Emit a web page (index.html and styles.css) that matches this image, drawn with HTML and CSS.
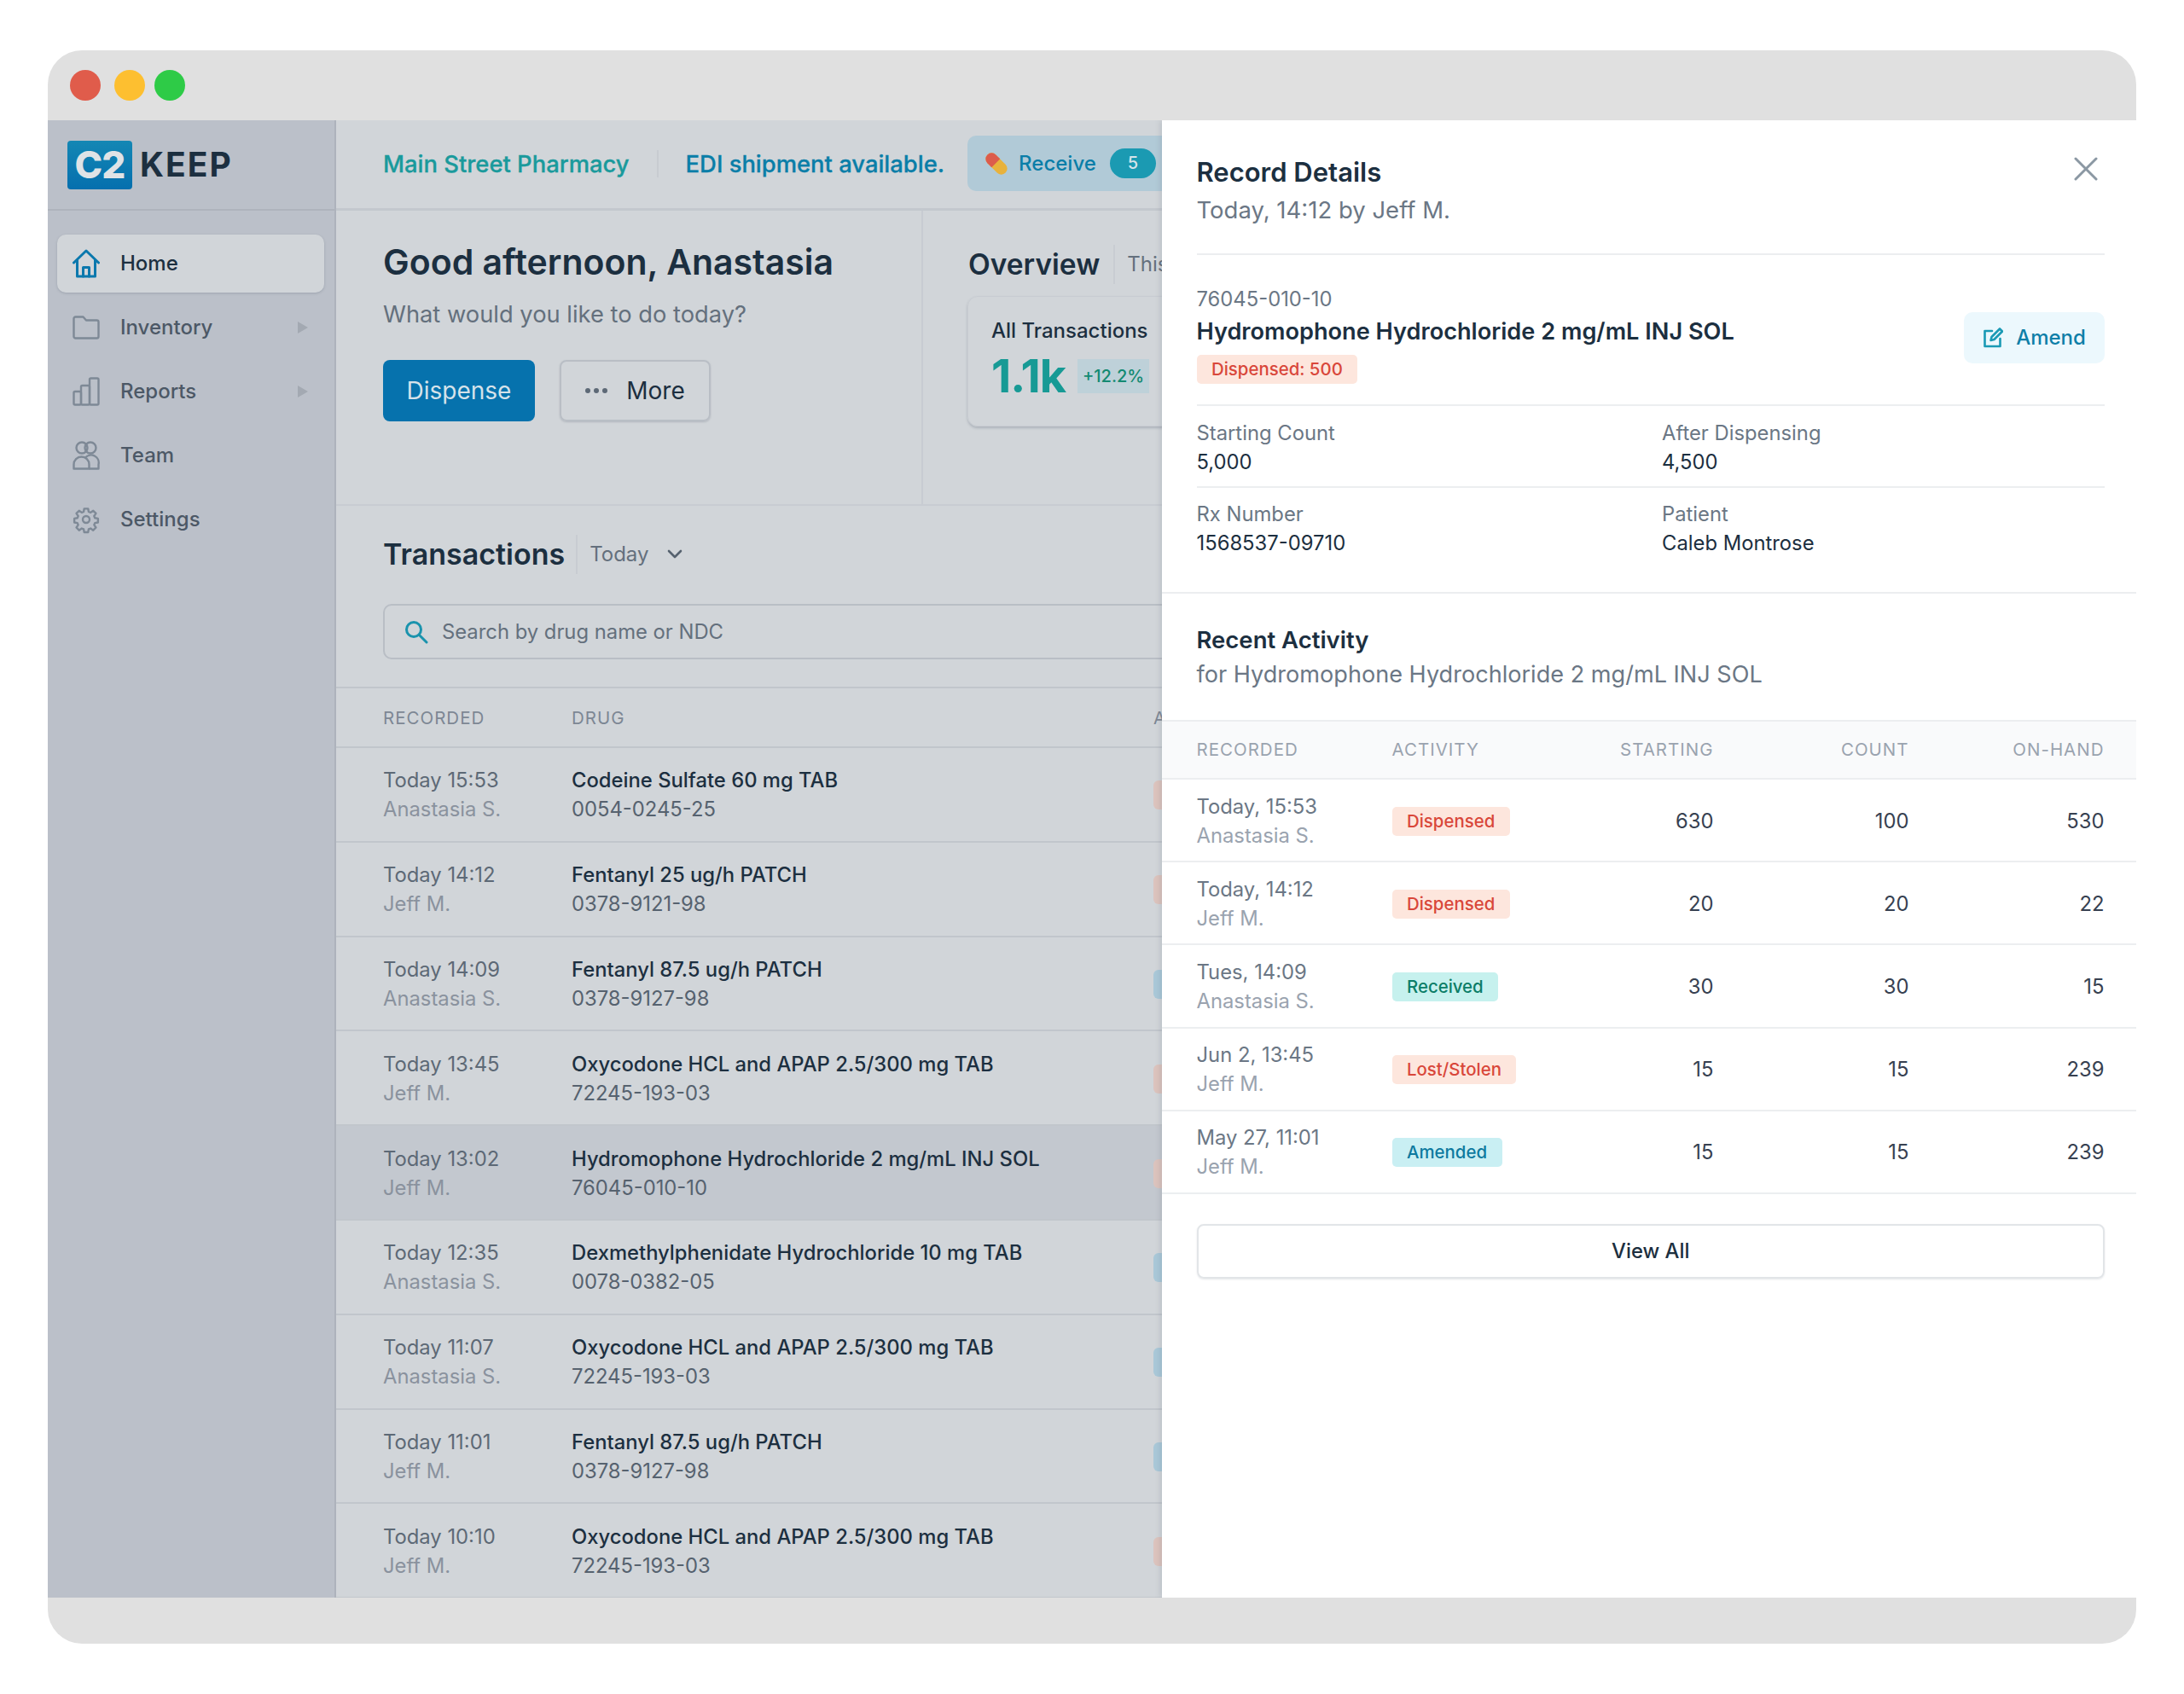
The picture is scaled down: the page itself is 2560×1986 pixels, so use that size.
FILE: index.html
```html
<!DOCTYPE html>
<html lang="en">
<head>
    <meta charset="UTF-8">
    <title>C2 Keep - Record Details</title>
    <link rel="stylesheet" href="styles.css">
</head>
<body>
    <div class="window">
        <div class="titlebar">
            <span class="light light-red"></span>
            <span class="light light-yellow"></span>
            <span class="light light-green"></span>
        </div>
        <div class="app">
            <aside class="sidebar">
                <div class="logo">
                    <span class="logo-mark">C2</span>
                    <span class="logo-word">KEEP</span>
                </div>
                <nav class="nav">
                    <a class="nav-item nav-item-active">
                        <svg class="nav-icon" viewBox="0 0 32 34" fill="none" stroke="#0a78ad" stroke-width="3" stroke-linejoin="round" stroke-linecap="round"><path d="M1.500 16 16 2l14.500 14"/><path d="M5.500 13v19h21V13"/><path d="M12.500 32V21.500h7V32"/></svg>
                        <span>Home</span>
                    </a>
                    <a class="nav-item">
                        <svg class="nav-icon" viewBox="0 0 32 34" fill="none" stroke="#7e8996" stroke-width="2.400" stroke-linejoin="round"><path d="M1.500 6.500a2 2 0 0 1 2-2h9l3.500 4h12.500a2 2 0 0 1 2 2v17a2 2 0 0 1-2 2h-25a2 2 0 0 1-2-2z"/></svg>
                        <span>Inventory</span>
                        <span class="nav-arrow"></span>
                    </a>
                    <a class="nav-item">
                        <svg class="nav-icon" viewBox="0 0 32 34" fill="none" stroke="#7e8996" stroke-width="2.400" stroke-linejoin="round"><rect x="1.500" y="17" width="8.500" height="15.500" rx="1.500"/><rect x="10" y="10" width="10" height="22.500" rx="1.500"/><rect x="20" y="1.500" width="10.500" height="31" rx="1.500"/></svg>
                        <span>Reports</span>
                        <span class="nav-arrow"></span>
                    </a>
                    <a class="nav-item">
                        <svg class="nav-icon" viewBox="0 0 32 34" fill="none" stroke="#7e8996" stroke-width="2.400" stroke-linejoin="round"><circle cx="11" cy="8" r="6.500"/><circle cx="21" cy="8" r="6.500"/><path d="M1.500 32.500v-5a9 9 0 0 1 18 0v5z"/><path d="M15 19.500a9 9 0 0 1 15.500 8v5H19.500"/></svg>
                        <span>Team</span>
                    </a>
                    <a class="nav-item">
                        <svg class="nav-icon" viewBox="0 0 24 24" fill="none" stroke="#7e8996" stroke-width="1.800" stroke-linejoin="round"><circle cx="12" cy="12" r="3"/><path d="M10.300 2.500h3.400l.5 2.700 1.700.7 2.300-1.600 2.400 2.400-1.600 2.300.7 1.700 2.700.5v3.400l-2.700.5-.7 1.700 1.600 2.300-2.400 2.400-2.300-1.600-1.700.7-.5 2.700h-3.400l-.5-2.700-1.700-.7-2.300 1.600-2.400-2.400 1.600-2.300-.7-1.700-2.700-.5v-3.400l2.700-.5.7-1.700-1.600-2.300 2.400-2.400 2.300 1.600 1.700-.7z"/></svg>
                        <span>Settings</span>
                    </a>
                </nav>
            </aside>

            <main class="main">
                <header class="topbar">
                    <span class="store-name">Main Street Pharmacy</span>
                    <span class="topbar-sep"></span>
                    <span class="edi-note">EDI shipment available.</span>
                    <a class="receive-btn">
                        <svg class="receive-icon" viewBox="0 0 26 26"><g transform="rotate(-45 13 13)"><rect x="6" y="-2" width="14" height="30" rx="7" fill="#e8b23c"/><path d="M6 12V5a7 7 0 0 1 14 0v7z" fill="#dc5c4c"/></g></svg>
                        <span>Receive</span>
                        <span class="receive-count">5</span>
                    </a>
                </header>

                <section class="hero">
                    <div class="hero-left">
                        <h1 class="greeting">Good afternoon, Anastasia</h1>
                        <p class="greeting-sub">What would you like to do today?</p>
                        <div class="hero-actions">
                            <a class="btn btn-primary">Dispense</a>
                            <a class="btn btn-outline"><span class="dots"><i></i><i></i><i></i></span>More</a>
                        </div>
                    </div>
                    <div class="hero-right">
                        <div class="overview-head">
                            <h2 class="overview-title">Overview</h2>
                            <span class="overview-range">This Week</span>
                        </div>
                        <div class="stat-card">
                            <div class="stat-label">All Transactions</div>
                            <div class="stat-row">
                                <span class="stat-value">1.1k</span>
                                <span class="stat-change">+12.2%</span>
                            </div>
                        </div>
                    </div>
                </section>

                <section class="tx-top">
                    <div class="tx-head">
                        <h2 class="tx-title">Transactions</h2>
                        <span class="tx-range">Today</span>
                        <svg class="tx-chevron" viewBox="0 0 20 12" fill="none" stroke="#56626f" stroke-width="2.600" stroke-linecap="round" stroke-linejoin="round"><path d="M3 2l7 7 7-7"/></svg>
                    </div>
                    <div class="search">
                        <svg class="search-icon" viewBox="0 0 28 28" fill="none" stroke="#1a93ad" stroke-width="3" stroke-linecap="round"><circle cx="11" cy="11" r="8.500"/><path d="M17.500 17.500 26 26"/></svg>
                        <span>Search by drug name or NDC</span>
                    </div>
                </section>

                <div class="tx-row tx-row-head">
                    <span>RECORDED</span><span>DRUG</span><span>ACTIVITY</span>
                </div>
                <div class="tx-row">
                    <div><div class="tx-time">Today 15:53</div><div class="tx-user">Anastasia S.</div></div>
                    <div><div class="tx-drug">Codeine Sulfate 60 mg TAB</div><div class="tx-ndc">0054-0245-25</div></div>
                    <span class="tx-peek tx-peek-red"></span>
                </div>
                <div class="tx-row">
                    <div><div class="tx-time">Today 14:12</div><div class="tx-user">Jeff M.</div></div>
                    <div><div class="tx-drug">Fentanyl 25 ug/h PATCH</div><div class="tx-ndc">0378-9121-98</div></div>
                    <span class="tx-peek tx-peek-red"></span>
                </div>
                <div class="tx-row">
                    <div><div class="tx-time">Today 14:09</div><div class="tx-user">Anastasia S.</div></div>
                    <div><div class="tx-drug">Fentanyl 87.5 ug/h PATCH</div><div class="tx-ndc">0378-9127-98</div></div>
                    <span class="tx-peek tx-peek-blue"></span>
                </div>
                <div class="tx-row">
                    <div><div class="tx-time">Today 13:45</div><div class="tx-user">Jeff M.</div></div>
                    <div><div class="tx-drug">Oxycodone HCL and APAP 2.5/300 mg TAB</div><div class="tx-ndc">72245-193-03</div></div>
                    <span class="tx-peek tx-peek-red"></span>
                </div>
                <div class="tx-row tx-row-selected">
                    <div><div class="tx-time">Today 13:02</div><div class="tx-user">Jeff M.</div></div>
                    <div><div class="tx-drug">Hydromophone Hydrochloride 2 mg/mL INJ SOL</div><div class="tx-ndc">76045-010-10</div></div>
                    <span class="tx-peek tx-peek-red"></span>
                </div>
                <div class="tx-row">
                    <div><div class="tx-time">Today 12:35</div><div class="tx-user">Anastasia S.</div></div>
                    <div><div class="tx-drug">Dexmethylphenidate Hydrochloride 10 mg TAB</div><div class="tx-ndc">0078-0382-05</div></div>
                    <span class="tx-peek tx-peek-blue"></span>
                </div>
                <div class="tx-row">
                    <div><div class="tx-time">Today 11:07</div><div class="tx-user">Anastasia S.</div></div>
                    <div><div class="tx-drug">Oxycodone HCL and APAP 2.5/300 mg TAB</div><div class="tx-ndc">72245-193-03</div></div>
                    <span class="tx-peek tx-peek-blue"></span>
                </div>
                <div class="tx-row">
                    <div><div class="tx-time">Today 11:01</div><div class="tx-user">Jeff M.</div></div>
                    <div><div class="tx-drug">Fentanyl 87.5 ug/h PATCH</div><div class="tx-ndc">0378-9127-98</div></div>
                    <span class="tx-peek tx-peek-blue"></span>
                </div>
                <div class="tx-row">
                    <div><div class="tx-time">Today 10:10</div><div class="tx-user">Jeff M.</div></div>
                    <div><div class="tx-drug">Oxycodone HCL and APAP 2.5/300 mg TAB</div><div class="tx-ndc">72245-193-03</div></div>
                    <span class="tx-peek tx-peek-red"></span>
                </div>
            </main>

            <aside class="detail">
                <div class="detail-head">
                    <div>
                        <h2 class="detail-title">Record Details</h2>
                        <p class="detail-sub">Today, 14:12 by Jeff M.</p>
                    </div>
                    <svg class="detail-close" viewBox="0 0 28 28" fill="none" stroke="#8b98a3" stroke-width="3" stroke-linecap="round"><path d="M2 2l24 24M26 2 2 26"/></svg>
                </div>

                <div class="record">
                    <div>
                        <div class="record-ndc">76045-010-10</div>
                        <div class="record-name">Hydromophone Hydrochloride 2 mg/mL INJ SOL</div>
                        <span class="badge badge-red">Dispensed: 500</span>
                    </div>
                    <a class="amend-btn">
                        <svg class="amend-icon" viewBox="0 0 24 24" fill="none" stroke="#1a9ab5" stroke-width="2.600" stroke-linecap="round" stroke-linejoin="round"><path d="M11 4H2.500v18h18v-9"/><path d="M9.500 15l1-4L20 1.500l3 3L13.500 14z"/></svg>
                        <span>Amend</span>
                    </a>
                </div>

                <div class="fields fields-first">
                    <div><div class="field-label">Starting Count</div><div class="field-value">5,000</div></div>
                    <div><div class="field-label">After Dispensing</div><div class="field-value">4,500</div></div>
                </div>
                <div class="fields fields-second">
                    <div><div class="field-label">Rx Number</div><div class="field-value">1568537-09710</div></div>
                    <div><div class="field-label">Patient</div><div class="field-value">Caleb Montrose</div></div>
                </div>

                <div class="recent-head">
                    <h3 class="recent-title">Recent Activity</h3>
                    <p class="recent-sub">for Hydromophone Hydrochloride 2 mg/mL INJ SOL</p>
                </div>

                <div class="act-row act-row-head">
                    <span>RECORDED</span><span>ACTIVITY</span>
                    <span class="num">STARTING</span><span class="num">COUNT</span><span class="num">ON-HAND</span>
                </div>
                <div class="act-row">
                    <div><div class="act-time">Today, 15:53</div><div class="act-user">Anastasia S.</div></div>
                    <div><span class="badge badge-red">Dispensed</span></div>
                    <span class="num">630</span><span class="num">100</span><span class="num">530</span>
                </div>
                <div class="act-row">
                    <div><div class="act-time">Today, 14:12</div><div class="act-user">Jeff M.</div></div>
                    <div><span class="badge badge-red">Dispensed</span></div>
                    <span class="num">20</span><span class="num">20</span><span class="num">22</span>
                </div>
                <div class="act-row">
                    <div><div class="act-time">Tues, 14:09</div><div class="act-user">Anastasia S.</div></div>
                    <div><span class="badge badge-green">Received</span></div>
                    <span class="num">30</span><span class="num">30</span><span class="num">15</span>
                </div>
                <div class="act-row">
                    <div><div class="act-time">Jun 2, 13:45</div><div class="act-user">Jeff M.</div></div>
                    <div><span class="badge badge-red">Lost/Stolen</span></div>
                    <span class="num">15</span><span class="num">15</span><span class="num">239</span>
                </div>
                <div class="act-row">
                    <div><div class="act-time">May 27, 11:01</div><div class="act-user">Jeff M.</div></div>
                    <div><span class="badge badge-blue">Amended</span></div>
                    <span class="num">15</span><span class="num">15</span><span class="num">239</span>
                </div>

                <a class="view-all">View All</a>
            </aside>
        </div>
        <div class="bottombar"></div>
    </div>
</body>
</html>
```

FILE: styles.css
```css
* {
    box-sizing: border-box;
}
body {
    margin: 0;
    padding: 59px 56px 0;
    background: #fff;
    font-family: 'Inter', 'Liberation Sans', sans-serif;
    font-size: 23.800px;
    line-height: 34px;
    color: #1c2f40;
}
h1, h2, h3, p {
    margin: 0;
}

/* window chrome */
.window {
    width: 2448px;
    height: 1868px;
    border-radius: 40px;
    overflow: hidden;
    background: #e0e0e0;
}
.titlebar {
    height: 82px;
    display: flex;
    align-items: center;
    padding-left: 26px;
}
.light {
    width: 36px;
    height: 36px;
    border-radius: 50%;
    margin-right: 11px;
}
.light-red {
    background: #e05c4b;
    margin-right: 16px;
}
.light-yellow {
    background: #fdbf30;
}
.light-green {
    background: #2ecb47;
}
.bottombar {
    height: 54px;
}
.app {
    height: 1732px;
    display: flex;
    overflow: hidden;
}

/* sidebar */
.sidebar {
    width: 338px;
    flex: none;
    background: #bbc0c9;
    border-right: 2px solid #aeb3bc;
}
.logo {
    height: 106px;
    display: flex;
    align-items: center;
    padding: 0 0 0 23px;
    border-bottom: 2px solid #aeb3bc;
}
.logo-mark {
    width: 76px;
    height: 57px;
    border-radius: 4px;
    background: linear-gradient(#1487b4, #056fae);
    color: #dfe3e6;
    font-size: 44px;
    font-weight: 800;
    line-height: 57px;
    text-align: center;
    letter-spacing: -1px;
}
.logo-word {
    margin-left: 9px;
    font-size: 39px;
    font-weight: 700;
    letter-spacing: 2px;
    color: #1c2f40;
}
.nav {
    padding: 28px 12px 0 11px;
}
.nav-item {
    height: 68px;
    margin-bottom: 7px;
    padding-left: 18px;
    display: flex;
    align-items: center;
    border-radius: 10px;
    color: #4c5866;
    font-weight: 500;
    font-size: 24px;
}
.nav-item-active {
    background: #d1d5d9;
    color: #1c2f40;
    box-shadow: 0 1px 3px rgba(90, 100, 115, 0.3);
}
.nav-icon {
    width: 32px;
    height: 34px;
    margin-right: 24px;
    flex: none;
}
.nav-arrow {
    margin-left: auto;
    margin-right: 19px;
    width: 0;
    height: 0;
    border-left: 12px solid #a3a9b2;
    border-top: 7px solid transparent;
    border-bottom: 7px solid transparent;
}

/* main column, cut off by the detail panel */
.main {
    width: 968px;
    flex: none;
    overflow: hidden;
    background: #d1d5d9;
}
.topbar {
    height: 106px;
    width: 1100px;
    padding: 0 0 2px 55px;
    display: flex;
    align-items: center;
    border-bottom: 3px solid #c3c8ce;
    font-size: 27.400px;
    font-weight: 500;
    -webkit-text-stroke: 0.3px;
}
.store-name {
    color: #1a9a9c;
}
.topbar-sep {
    width: 2px;
    height: 32px;
    margin: 0 32px 0 32px;
    background: #c8ccd1;
}
.edi-note {
    color: #0a7ea8;
}
.receive-btn {
    margin-left: 27px;
    width: 300px;
    height: 65px;
    padding-left: 21px;
    display: flex;
    align-items: center;
    border-radius: 10px;
    background: #b1cad7;
    color: #0a7ea8;
    font-size: 24px;
    -webkit-text-stroke: 0;
}
.receive-icon {
    width: 26px;
    height: 26px;
    margin-right: 13px;
}
.receive-count {
    width: 54px;
    height: 35px;
    margin-left: 16px;
    border-radius: 18px;
    background: #1b9ab2;
    color: #d6e4ea;
    font-size: 20px;
    line-height: 35px;
    text-align: center;
}
.hero {
    height: 346px;
    display: flex;
    border-bottom: 2px solid #c8ccd2;
}
.hero-left {
    width: 688px;
    flex: none;
    padding: 35px 0 0 55px;
    border-right: 2px solid #c8ccd2;
}
.greeting {
    font-size: 41px;
    line-height: 50px;
    font-weight: 600;
}
.greeting-sub {
    margin-top: 20px;
    font-size: 27.300px;
    color: #64707d;
}
.hero-actions {
    margin-top: 36px;
    display: flex;
    gap: 29px;
}
.btn {
    height: 72px;
    display: flex;
    align-items: center;
    justify-content: center;
    border-radius: 8px;
    font-size: 28px;
}
.btn-primary {
    width: 178px;
    background: #0672ad;
    color: #d5e2ea;
}
.btn-outline {
    width: 177px;
    border: 2px solid #b9bec5;
    box-shadow: 0 1px 2px rgba(90, 100, 115, 0.25);
    color: #1c2f40;
}
.dots {
    display: flex;
    gap: 4px;
    margin-right: 22px;
}
.dots i {
    width: 6px;
    height: 6px;
    border-radius: 50%;
    background: #5d6976;
}
.hero-right {
    width: 600px;
    flex: none;
    padding: 40px 0 0 53px;
}
.overview-head {
    height: 46px;
    display: flex;
    align-items: center;
}
.overview-title {
    font-size: 33.500px;
    font-weight: 600;
    padding-right: 16px;
    border-right: 2px solid #c8ccd2;
    line-height: 46px;
}
.overview-range {
    margin-left: 14px;
    color: #64707d;
    font-size: 24px;
}
.stat-card {
    width: 460px;
    height: 153px;
    margin-top: 14px;
    margin-left: -1px;
    padding: 23px 0 0 27px;
    border: 1px solid #c8ccd2;
    border-radius: 12px;
    box-shadow: 0 2px 3px rgba(90, 100, 115, 0.3);
}
.stat-label {
    font-weight: 500;
    font-size: 24px;
}
.stat-row {
    display: flex;
    align-items: center;
    margin-top: 5px;
}
.stat-value {
    font-size: 54px;
    line-height: 62px;
    font-weight: 700;
    color: #179a95;
    letter-spacing: -1px;
}
.stat-change {
    width: 84px;
    height: 40px;
    margin-left: 14px;
    background: #bed1d9;
    color: #148a72;
    font-size: 20px;
    font-weight: 500;
    line-height: 40px;
    text-align: center;
}
.tx-top {
    height: 212px;
    padding: 34px 0 0 55px;
}
.tx-head {
    height: 46px;
    display: flex;
    align-items: center;
}
.tx-title {
    font-size: 34px;
    line-height: 46px;
    font-weight: 600;
    padding-right: 13px;
    border-right: 2px solid #c8ccd2;
}
.tx-range {
    margin-left: 14px;
    color: #64707d;
    font-size: 24px;
}
.tx-chevron {
    width: 20px;
    height: 12px;
    margin-left: 21px;
}
.search {
    width: 1200px;
    height: 65px;
    margin-top: 35px;
    padding-left: 23px;
    display: flex;
    align-items: center;
    border: 2px solid #b9bec5;
    border-radius: 10px;
    color: #64707d;
}
.search-icon {
    width: 28px;
    height: 28px;
    margin-right: 16px;
}
.tx-row {
    height: 110.800px;
    width: 1100px;
    padding: 2px 0 0 55px;
    display: grid;
    grid-template-columns: 221px 682px 1fr;
    align-items: center;
    border-bottom: 2px solid #c1c6cc;
}
.tx-row-head {
    height: 72px;
    border-top: 2px solid #c1c6cc;
    color: #7d8794;
    font-size: 20.500px;
    letter-spacing: 1px;
}
.tx-row-selected {
    background: #c3c8cf;
}
.tx-time {
    color: #5d6976;
}
.tx-user {
    color: #8a929e;
}
.tx-drug {
    font-weight: 500;
    color: #1c2f40;
}
.tx-ndc {
    color: #56626f;
}
.tx-peek {
    width: 60px;
    height: 34px;
    border-radius: 6px;
}
.tx-peek-red {
    background: #dcc3bd;
}
.tx-peek-blue {
    background: #a9c8d8;
}

/* detail panel */
.detail {
    width: 1142px;
    flex: none;
    background: #fff;
    box-shadow: -2px 0 6px rgba(90, 100, 115, 0.18);
    position: relative;
}
.detail-head {
    height: 158px;
    margin: 0 37px 0 40.500px;
    padding-top: 43px;
    display: flex;
    justify-content: space-between;
    border-bottom: 2px solid #eceef0;
}
.detail-title {
    font-size: 31px;
    line-height: 36px;
    font-weight: 600;
}
.detail-sub {
    margin-top: 9px;
    font-size: 27.500px;
    color: #6b7785;
}
.detail-close {
    width: 28px;
    height: 28px;
    margin: 0 8px 0 0;
}
.record {
    height: 177px;
    margin: 0 37px 0 40.500px;
    padding-top: 36px;
    display: flex;
    justify-content: space-between;
    border-bottom: 2px solid #eceef0;
}
.record-ndc {
    line-height: 32px;
    color: #6b7785;
}
.record-name {
    margin-top: 4px;
    font-size: 27.150px;
    line-height: 36px;
    font-weight: 600;
}
.badge {
    display: inline-block;
    height: 34px;
    margin-top: 9px;
    padding: 0 17.500px;
    border-radius: 5px;
    font-size: 20.400px;
    line-height: 34px;
    font-weight: 500;
}
.act-row .badge {
    display: block;
    width: fit-content;
    margin-top: 0;
}
.badge-red {
    background: #fde6dd;
    color: #d9473a;
}
.badge-green {
    background: #c6f1ee;
    color: #0b7d67;
}
.badge-blue {
    background: #c9eff3;
    color: #0d7a9f;
}
.amend-btn {
    width: 165px;
    height: 60px;
    margin-top: 31px;
    display: flex;
    align-items: center;
    justify-content: center;
    border-radius: 10px;
    background: #ecf8fd;
    color: #0e7fa8;
    font-size: 24px;
    font-weight: 500;
}
.amend-icon {
    width: 24px;
    height: 24px;
    margin-right: 15px;
}
.fields {
    margin: 0 37px 0 40.500px;
    display: grid;
    grid-template-columns: 545.500px 1fr;
    line-height: 32px;
}
.fields-first {
    height: 96px;
    padding-top: 16px;
    border-bottom: 2px solid #eceef0;
}
.fields-second {
    height: 122px;
    padding-top: 15px;
}
.field-label {
    color: #6b7785;
}
.field-value {
    margin-top: 2px;
}
.recent-head {
    height: 150px;
    padding: 37px 37px 0 40.500px;
    border-top: 2px solid #eceef0;
}
.recent-title {
    font-size: 27.500px;
    line-height: 34px;
    font-weight: 600;
}
.recent-sub {
    margin-top: 7px;
    font-size: 27.100px;
    color: #6b7785;
}
.act-row {
    height: 97.200px;
    padding: 2px 38px 0 40.500px;
    display: grid;
    grid-template-columns: 229px 150px 227px 229px 229px;
    align-items: center;
    border-bottom: 2px solid #eceef0;
    color: #374151;
}
.act-row-head {
    height: 70px;
    padding-top: 0;
    border-top: 2px solid #eceef0;
    background: #f9fafb;
    color: #9aa3af;
    font-size: 20.500px;
    letter-spacing: 1px;
}
.act-time {
    color: #6b7785;
}
.act-user {
    color: #9aa3af;
}
.num {
    text-align: right;
}
.view-all {
    height: 64px;
    margin: 35px 37px 0 40.500px;
    display: flex;
    align-items: center;
    justify-content: center;
    border: 2px solid #e2e5e8;
    border-radius: 8px;
    box-shadow: 0 1px 2px rgba(90, 100, 115, 0.15);
    font-weight: 500;
    color: #1c2f40;
}
```
